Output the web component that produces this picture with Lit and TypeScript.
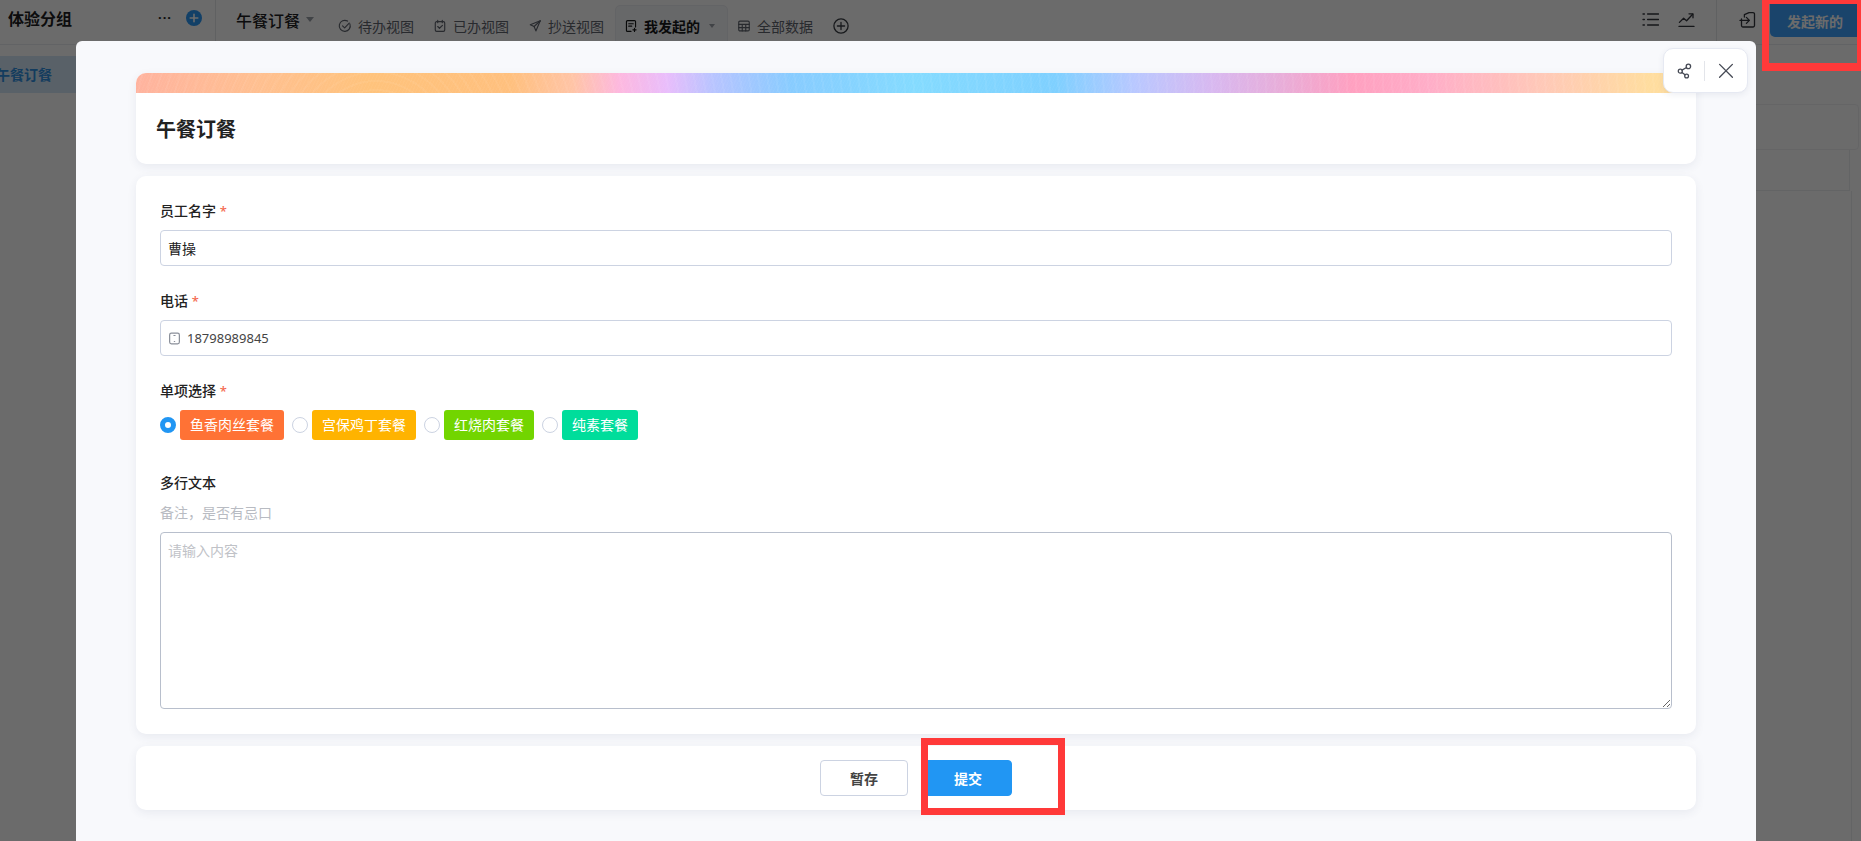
import { LitElement, html, css, svg } from "lit";
import { customElement } from "lit/decorators.js";

const ic = (w: number, body: unknown, vb = 16) =>
  html`<svg class="ic" width=${w} height=${w} viewBox="0 0 ${vb} ${vb}" fill="none" stroke="currentColor" stroke-width="1.3" stroke-linecap="round" stroke-linejoin="round">${body}</svg>`;

const icons = {
  check: svg`<path d="M13.6 5.6A6.3 6.3 0 1 1 10.9 2.4"/><path d="M5.2 7.8l2.4 2.4 5.2-5.6"/>`,
  cal: svg`<rect x="2.6" y="3" width="10.8" height="11.2" rx="1.6"/><path d="M5.4 1.6v2.6M10.6 1.6v2.6M5.4 8.6l2 2 3.4-3.4"/>`,
  send: svg`<path d="M14 2 2.6 6.6l4.4 2 2 5z"/><path d="M14 2 7 8.6"/>`,
  mine: svg`<path d="M8 14.2H4a1.2 1.2 0 0 1-1.2-1.2V3A1.2 1.2 0 0 1 4 1.8h8A1.2 1.2 0 0 1 13.2 3v6"/><path d="M5.4 5.4h5.2M5.4 8.2h3.4M12 10.6v3.6M10.2 12.4h3.6"/>`,
  table: svg`<rect x="2" y="2.4" width="12" height="11.2" rx="1.4"/><path d="M2 6.2h12M2 9.9h12M6 6.2v7.4M10 6.2v7.4"/>`,
  plus: svg`<circle cx="8" cy="8" r="7.1"/><path d="M8 4.4v7.2M4.4 8h7.2"/>`,
  list: svg`<path d="M5.6 3h11M5.6 8.5h11M5.6 14h11M1 3h1.4M1 8.5h1.4M1 14h1.4"/>`,
  chart: svg`<path d="M1 15.4h15M1.4 11.4l4.2-4.2 3 2.6 6-6.6"/><path d="M11 2.8h4v4"/>`,
  login: svg`<path d="M5.4 6V3.6L10 1.6h4a1.5 1.5 0 0 1 1.5 1.5v11.4a1.5 1.5 0 0 1-1.5 1.5H4a1.5 1.5 0 0 1-1.5-1.5V8"/><path d="M1 9.4h9M7.4 6.4l3 3-3 3"/>`,
  share: svg`<circle cx="3.3" cy="8.2" r="2"/><circle cx="11.4" cy="3.4" r="2.2"/><circle cx="9.6" cy="13" r="1.9"/><path d="M5 7.1l4.5-2.6M5 9.4l3 2.4"/>`,
  close: svg`<path d="M1.6 1.4l12.8 12.9M14.4 1.4 1.6 14.3"/>`,
  phone: svg`<rect x="2" y="1.4" width="12" height="13.2" rx="2.2" stroke-width="1.5"/><path d="M7.2 4.2h1.6M7.7 11.6h.6"/>`,
};

@customElement("app-root")
export class AppRoot extends LitElement {
  static styles = css`
    :host { display: block; position: relative; width: 100%; height: 100vh; overflow: hidden; background: #fff;
      font-family: "Noto Sans", "Noto Sans CJK SC", sans-serif; font-size: 14px; color: #222; }
    * { box-sizing: border-box; }
    .ic { display: block; flex: none; }

    /* page behind the dialog */
    .page { display: flex; flex-direction: column; height: 100%; }
    .top { display: flex; height: 45px; border-bottom: 1px solid #e9ebf0; flex: none; }
    .group { width: 216px; flex: none; display: flex; align-items: center; padding: 0 13px 6px 8px; border-right: 1px solid #e4e6ea; font-size: 16px; font-weight: 700; color: #1d1d1f; height: 41px; }
    .group .dots { margin-left: auto; margin-right: 14px; font-size: 13px; letter-spacing: 1px; line-height: 1; }
    .addbtn { width: 16px; height: 16px; border-radius: 50%; background: #2b98f5; position: relative; flex: none; }
    .addbtn svg { color: #fff; }
    .title { margin: 11px 0 0 20px; font-size: 16px; line-height: 20px; font-weight: 500; color: #1d1d1f; display: flex; height: 20px; }
    .tri { width: 0; height: 0; border-left: 4px solid transparent; border-right: 4px solid transparent; border-top: 5px solid #9a9fa8; flex: none; }
    .title .tri { margin: 6px 0 0 6px; }
    .tabs { display: flex; margin-left: 24px; align-items: flex-start; }
    .tab { display: flex; align-items: center; gap: 6px; height: 42px; margin-top: 5px; color: #5f646e; }
    .tab + .tab { margin-left: 19px; }
    .tab.on { color: #17181a; font-weight: 700; background: #f6f7f9; border: 1px solid #eceef2; border-radius: 5px 5px 0 0; padding: 0 12px 0 8px; margin-left: 11px; width: 113px; }
    .tab.on .tri { margin-left: 3px; border-left-width: 3px; border-right-width: 3px; border-top-width: 4px; }
    .tab.on + .tab { margin-left: 9px; }
    .tabplus { margin: 18px 0 0 20px; color: #3a3d44; }
    .tools { margin-left: auto; display: flex; align-items: flex-start; color: #32353c; padding-right: 1px; }
    .tools .t1 { margin: 11px 19px 0 0; }
    .tools .t2 { margin: 11px 21px 0 0; }
    .tools .sep { width: 1px; height: 41px; background: #e4e6ea; margin-right: 22px; }
    .tools .t3 { margin: 11px 14px 0 0; }
    .start { width: 90px; height: 33px; margin-top: 4px; background: #3ea2ff; color: #fff; font-weight: 700; display: flex; align-items: center; justify-content: center; border-radius: 0 0 0 5px; }
    .body { flex: 1; display: flex; min-height: 0; }
    .side { width: 216px; flex: none; padding-top: 11px; }
    .side .row { height: 37px; background: #d3e6f8; color: #2f8fe0; font-weight: 700; line-height: 37px; text-indent: -4px; white-space: nowrap; overflow: hidden; }
    .main { flex: 1; padding: 59px 2px 0 0; display: flex; flex-direction: column; align-items: stretch; }
    .tcard { height: 46px; border: 1px solid #f0f1f4; border-radius: 4px; flex: none; }
    .trow { height: 41px; border-right: 1px solid #eceef1; border-bottom: 1px solid #eceef1; margin-right: 9px; flex: none; }
    .trow.b { margin-right: 7px; flex: 1; border-bottom: 0; }

    /* dialog */
    .mask { position: absolute; inset: 0; background: rgba(0, 0, 0, .58); }
    .modal { position: absolute; left: 76px; top: 41px; width: 1680px; height: 800px; background: #f8f9fc; border-radius: 6px 6px 0 0; padding: 32px 60px 0; display: flex; flex-direction: column; gap: 12px; overflow: hidden; }
    .card { background: #fff; border-radius: 10px; box-shadow: 0 3px 10px rgba(50, 60, 100, .08); flex: none; }
    .head { height: 91px; overflow: hidden; }
    .banner { height: 20px;
      background:
        repeating-radial-gradient(circle at 240px 72px, rgba(255,255,255,.05) 0 2px, transparent 2px 9px),
        repeating-linear-gradient(115deg, rgba(255,255,255,.035) 0 1px, transparent 1px 3px),
        linear-gradient(90deg, #ffb39f 0%, #ffc090 8%, #ffc37c 15%, #ffc07e 24%, #ffc4a6 28%, #fdb8df 31%, #e9bdfb 34%, #b8c4ff 37%, #88ccff 42%, #84dbff 50%, #7fd0ff 59%, #b9c8ff 64%, #d8b8f0 69%, #e6aedb 73%, #ffa0c0 78%, #ffaec8 83%, #ffc8b8 90%, #ffdd9f 97%, #ffdd9f 100%); }
    h1 { margin: 0; font-size: 20px; line-height: 28px; font-weight: 700; color: #222; padding: 23px 0 0 20px; }
    .form { height: 558px; padding: 25px 24px 0; display: flex; flex-direction: column; }
    .label { line-height: 20px; height: 20px; font-size: 14px; font-weight: 500; color: #222; margin-bottom: 9px; }
    .label em { font-style: normal; color: #f4694f; margin-left: 0; font-size: 13px; }
    .field { height: 36px; display: flex; align-items: center; border: 1px solid #ccd3e2; border-radius: 4px; padding: 0 7px; gap: 6px; margin-bottom: 25px; background: #fff; color: #8a8f99; }
    .field input { flex: 1; border: 0; outline: 0; padding: 0; font: inherit; font-size: 14px; color: #222; background: none; min-width: 0; }
    .field input.num { font-size: 13px; color: #444; }
    .opts { display: flex; align-items: center; height: 30px; gap: 4px; margin-bottom: 33px; }
    .radio { width: 16px; height: 16px; border-radius: 50%; border: 1px solid #ccd3e2; background: #fff; flex: none; }
    .radio.on { border: 5px solid #2196f3; }
    .tag { height: 30px; line-height: 30px; padding: 0 10px; border-radius: 3px; color: #fff; font-size: 14px; margin-right: 4px; white-space: nowrap; }
    .label.plain { margin-bottom: 10px; }
    .desc { line-height: 20px; color: #b8bbc2; margin-bottom: 9px; }
    textarea { display: block; height: 177px; width: 100%; border: 1px solid #b8bfcc; border-radius: 4px; padding: 8px 7px; margin: 0; font: inherit; font-size: 14px; line-height: 20px; outline: 0; color: #333; }
    textarea::placeholder { color: #c0c2c7; }
    .foot { height: 64px; display: flex; align-items: center; justify-content: center; gap: 16px; }
    .btn { width: 88px; height: 36px; border-radius: 4px; font: inherit; font-size: 14px; font-weight: 700; border: 1px solid #ccd3e2; background: #fff; color: #444; padding: 0; }
    .btn.pri { background: #2196f3; border-color: #2196f3; color: #fff; }
    .float { position: absolute; left: 1663px; top: 48px; width: 85px; height: 45px; background: #fff; border: 1px solid #e6e9f2; border-radius: 10px; box-shadow: 0 2px 6px rgba(50,60,100,.08); display: flex; align-items: center; padding-left: 13px; color: #454954; }
    .float i { width: 1px; height: 20px; background: #e3e5ea; margin: 0 13px 0 11px; }

    /* annotation frames */
    .mark { position: absolute; border: 7px solid #ff3939; pointer-events: none; }
    .m1 { left: 1762px; top: 0; width: 99px; height: 71px; border-width: 4px 4px 8px 7px; }
    .m2 { left: 921px; top: 738px; width: 144px; height: 77px; }
  `;

  private tab(icon: unknown, text: string, cls = "") {
    return html`<div class="tab ${cls}">${ic(14, icon)}<span>${text}</span>${cls ? html`<span class="tri"></span>` : ""}</div>`;
  }

  private option(text: string, color: string, on = false) {
    return html`<span class="radio ${on ? "on" : ""}"></span><span class="tag" style="background:${color}">${text}</span>`;
  }

  render() {
    return html`
      <div class="page">
        <div class="top">
          <div class="group">
            <span>体验分组</span><span class="dots">···</span>
            <span class="addbtn">${ic(16, svg`<path d="M8 4.2v7.6M4.2 8h7.6" stroke-width="1.6"/>`)}</span>
          </div>
          <div class="title"><span>午餐订餐</span><span class="tri"></span></div>
          <div class="tabs">
            ${this.tab(icons.check, "待办视图")}
            ${this.tab(icons.cal, "已办视图")}
            ${this.tab(icons.send, "抄送视图")}
            ${this.tab(icons.mine, "我发起的", "on")}
            ${this.tab(icons.table, "全部数据")}
            <span class="tabplus">${ic(16, icons.plus)}</span>
          </div>
          <div class="tools">
            <span class="t1">${ic(17, icons.list, 17)}</span>
            <span class="t2">${ic(17, icons.chart, 17)}</span>
            <span class="sep"></span>
            <span class="t3">${ic(17, icons.login, 17)}</span>
            <div class="start">发起新的</div>
          </div>
        </div>
        <div class="body">
          <div class="side"><div class="row">午餐订餐</div></div>
          <div class="main">
            <div class="tcard"></div>
            <div class="trow"></div>
            <div class="trow b"></div>
          </div>
        </div>
      </div>

      <div class="mask"></div>

      <div class="modal">
        <div class="card head">
          <div class="banner"></div>
          <h1>午餐订餐</h1>
        </div>
        <div class="card form">
          <div class="label">员工名字 <em>*</em></div>
          <div class="field"><input value="曹操" /></div>
          <div class="label">电话 <em>*</em></div>
          <div class="field">${ic(13, icons.phone)}<input class="num" value="18798989845" /></div>
          <div class="label">单项选择 <em>*</em></div>
          <div class="opts">
            ${this.option("鱼香肉丝套餐", "#ff7235", true)}
            ${this.option("宫保鸡丁套餐", "#ffb300")}
            ${this.option("红烧肉套餐", "#72d500")}
            ${this.option("纯素套餐", "#00dd9b")}
          </div>
          <div class="label plain">多行文本</div>
          <div class="desc">备注，是否有忌口</div>
          <textarea placeholder="请输入内容"></textarea>
        </div>
        <div class="card foot">
          <button class="btn">暂存</button>
          <button class="btn pri">提交</button>
        </div>
      </div>
      <div class="float">${ic(16, icons.share)}<i></i>${ic(16, icons.close)}</div>

      <div class="mark m1"></div>
      <div class="mark m2"></div>
    `;
  }
}
